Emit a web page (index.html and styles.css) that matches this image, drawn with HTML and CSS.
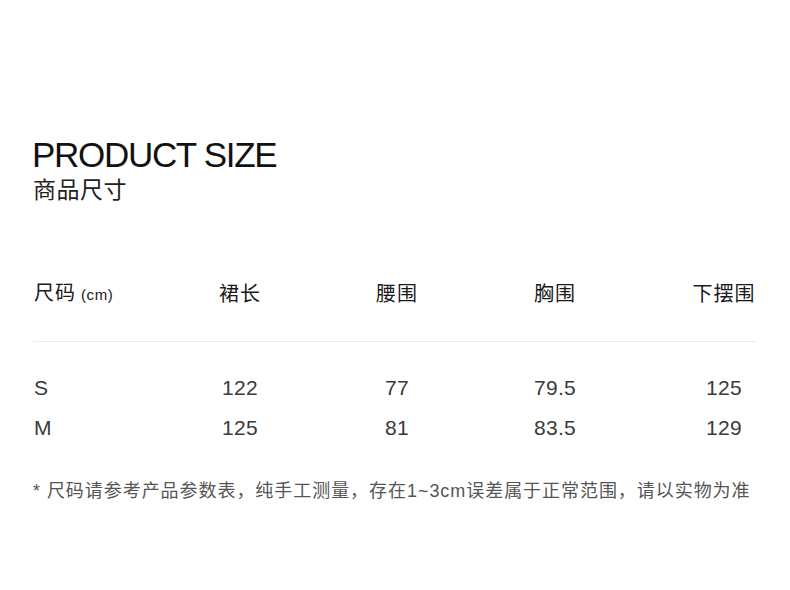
FILE: index.html
```html
<!DOCTYPE html>
<html lang="zh-CN">
<head>
<meta charset="utf-8">
<title>Product Size</title>
<link rel="stylesheet" href="styles.css">
</head>
<body>
<main class="page">
  <header class="heading">
    <h1 class="title">PRODUCT SIZE</h1>
    <p class="subtitle">商品尺寸</p>
  </header>

  <section class="size-table">
    <div class="row head">
      <div class="cell label">尺码<span class="unit">(cm)</span></div>
      <div class="cell">裙长</div>
      <div class="cell">腰围</div>
      <div class="cell">胸围</div>
      <div class="cell last">下摆围</div>
    </div>
    <div class="rule"></div>
    <div class="row data first-data">
      <div class="cell label">S</div>
      <div class="cell">122</div>
      <div class="cell">77</div>
      <div class="cell">79.5</div>
      <div class="cell last">125</div>
    </div>
    <div class="row data">
      <div class="cell label">M</div>
      <div class="cell">125</div>
      <div class="cell">81</div>
      <div class="cell">83.5</div>
      <div class="cell last">129</div>
    </div>
  </section>

  <p class="note">* 尺码请参考产品参数表，纯手工测量，存在1~3cm误差属于正常范围，请以实物为准</p>
</main>
</body>
</html>
```

FILE: styles.css
```css
html, body {
  margin: 0;
  padding: 0;
  background: #ffffff;
}

body {
  font-family: "Liberation Sans", "Noto Sans CJK SC", sans-serif;
  color: #222;
}

.page {
  width: 723px;
  padding: 135px 34px 0 33px;
}

.heading {
  margin: 0;
}

.title {
  margin: 0 0 0 -1px;
  font-size: 35px;
  line-height: 40px;
  font-weight: 400;
  letter-spacing: -1.3px;
  color: #111;
}

.subtitle {
  margin: 2px 0 0 0;
  font-family: "Noto Sans CJK SC", sans-serif;
  font-size: 23px;
  line-height: 23px;
  letter-spacing: 0.5px;
  color: #222;
}

.size-table {
  margin-top: 73px;
}

.row {
  display: grid;
  grid-template-columns: 117px 180px 134px 182px 1fr;
  align-items: center;
  height: 40px;
}

.cell {
  text-align: center;
  white-space: nowrap;
}

.cell.label {
  text-align: left;
  padding-left: 1px;
}

.cell.last {
  padding-left: 46px;
}

.head .cell {
  font-size: 20px;
  line-height: 40px;
  letter-spacing: 1px;
  color: #1a1a1a;
}

.unit {
  font-size: 15px;
  letter-spacing: 0.6px;
  margin-left: 5px;
}

.rule {
  height: 1px;
  background: #ededed;
  margin-top: 28px;
}

.first-data {
  margin-top: 26px;
}

.data .cell {
  font-size: 21px;
  line-height: 40px;
  color: #3a3a3a;
  letter-spacing: 0.3px;
}

.note {
  margin: 31px 0 0 0;
  font-size: 18px;
  line-height: 24px;
  letter-spacing: 0.95px;
  color: #555;
  white-space: nowrap;
}
```
